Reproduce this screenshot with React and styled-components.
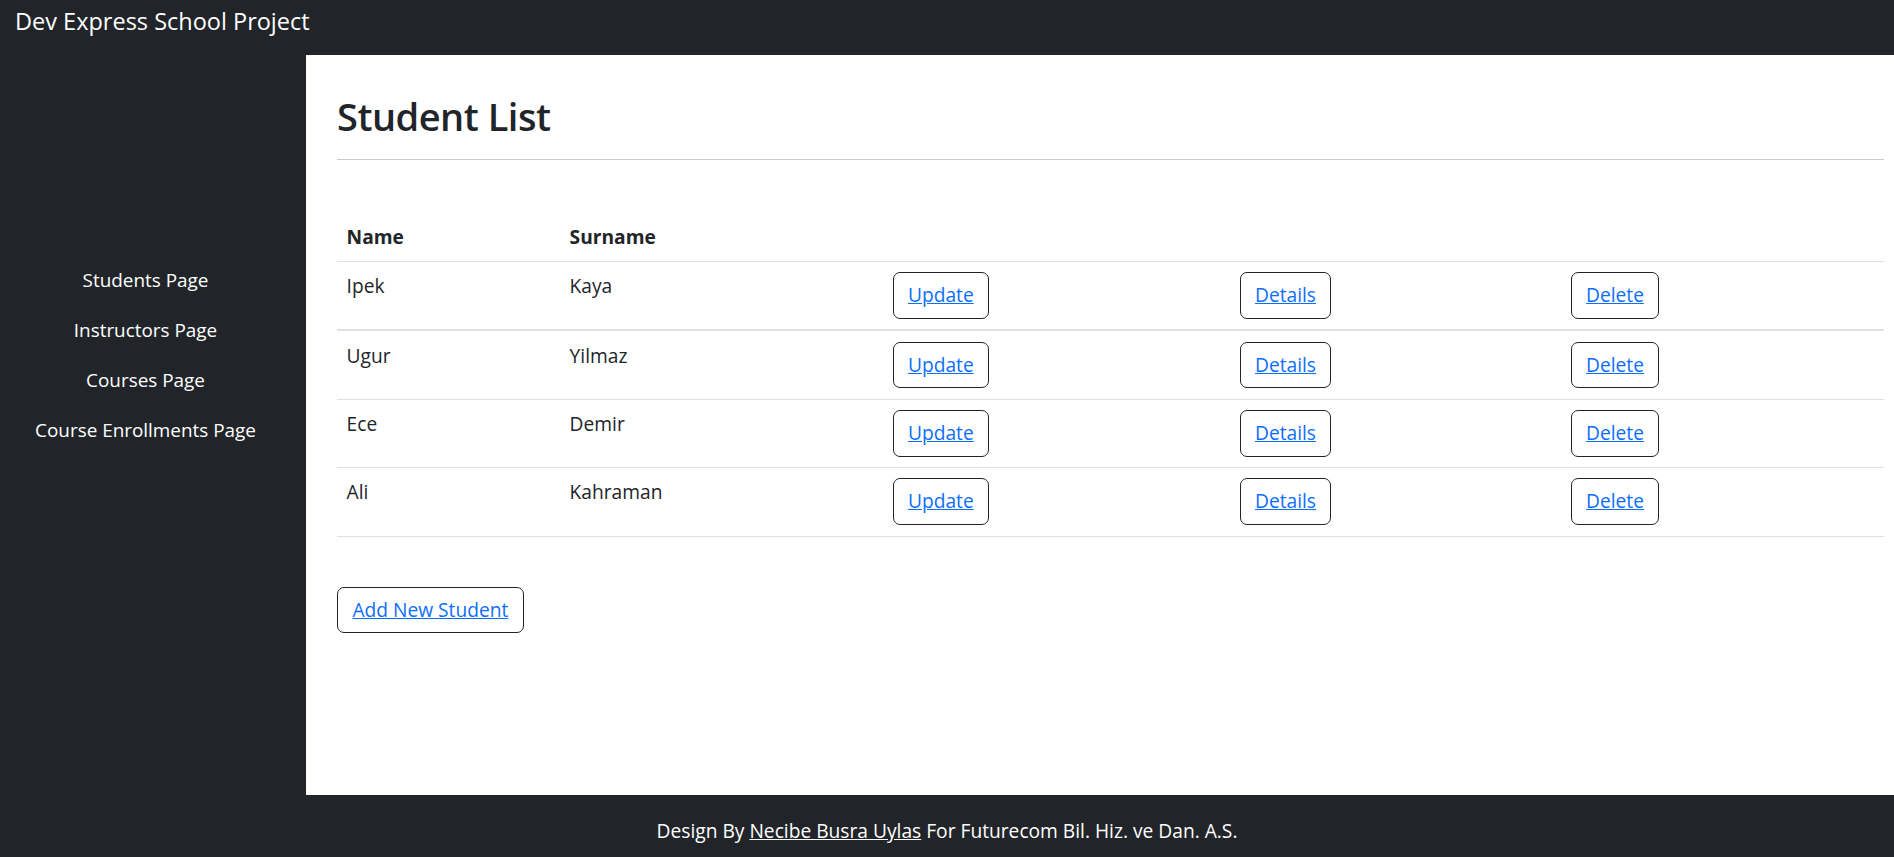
import React from "react";
import styled, { createGlobalStyle } from "styled-components";

const GlobalStyle = createGlobalStyle`
  html, body { margin: 0; padding: 0; }
  body {
    font-family: "Open Sans", "Noto Sans", "Liberation Sans", sans-serif;
    font-size: 19.2px;
    line-height: 1.5;
    color: #212529;
    background: #fff;
    overflow: hidden;
  }
  * { box-sizing: border-box; }
`;

const Page = styled.div`
  display: grid;
  grid-template-rows: 55px 1fr 62px;
  height: 100vh;
`;

const Navbar = styled.header`
  background: #212529;
  display: flex;
  align-items: flex-start;
  padding: 3px 0 0 15px;
`;

const Brand = styled.a`
  color: #fff;
  font-size: 23.5px;
  line-height: 36px;
  text-decoration: none;
`;

const Body = styled.div`
  display: grid;
  grid-template-columns: 306px 1fr;
  min-height: 0;
`;

const Sidebar = styled.nav`
  background: #212529;
  padding: 200px 15px 0 0;
`;

const NavList = styled.ul`
  list-style: none;
  margin: 0;
  padding: 0;
  display: flex;
  flex-direction: column;
  align-items: center;
`;

const NavLink = styled.a`
  display: block;
  color: #fff;
  text-decoration: none;
  padding: 10.6px 16px;
  line-height: 28.8px;
  font-size: 18.9px;
`;

const Main = styled.main`
  background: #fff;
  padding: 37px 10px 0 31px;
`;

const Title = styled.h1`
  margin: 0;
  font-size: 38px;
  font-weight: 600;
  letter-spacing: -0.5px;
  line-height: 48px;
`;

const Rule = styled.hr`
  margin: 19px 0 0;
  border: 0;
  border-top: 1px solid #c8c9ca;
`;

const Table = styled.table`
  width: 100%;
  border-collapse: collapse;
  margin: 53px 0 50px;
`;

const HeadCell = styled.th`
  text-align: left;
  font-weight: 700;
  padding: 9.6px;
  width: ${(p) => p.$width || "auto"};
  border-bottom: 1px solid #dee2e6;
  vertical-align: bottom;
`;

const Row = styled.tr`
  border-bottom: ${(p) => (p.$thick ? "2px" : "1px")} solid #dee2e6;
`;

const Cell = styled.td`
  padding: 10.3px 9.6px;
  vertical-align: top;
`;

const ActionButton = styled.a`
  display: inline-block;
  padding: 8px 14.4px;
  border: 1px solid #212529;
  border-radius: 7px;
  background: #fff;
  color: #0d6efd;
  text-decoration: underline;
  line-height: 28.8px;
  cursor: pointer;
`;

const Footer = styled.footer`
  background: #212529;
  color: #fff;
  text-align: center;
  padding-top: 21.6px;
  line-height: 28.8px;
`;

const FooterLink = styled.a`
  color: #fff;
  text-decoration: underline;
`;

const students = [
  { name: "Ipek", surname: "Kaya" },
  { name: "Ugur", surname: "Yilmaz" },
  { name: "Ece", surname: "Demir" },
  { name: "Ali", surname: "Kahraman" },
];

export default function App() {
  return (
    <>
      <GlobalStyle />
      <Page>
        <Navbar>
          <Brand href="#">Dev Express School Project</Brand>
        </Navbar>
        <Body>
          <Sidebar>
            <NavList>
              <li><NavLink href="#">Students Page</NavLink></li>
              <li><NavLink href="#">Instructors Page</NavLink></li>
              <li><NavLink href="#">Courses Page</NavLink></li>
              <li><NavLink href="#">Course Enrollments Page</NavLink></li>
            </NavList>
          </Sidebar>
          <Main>
            <Title>Student List</Title>
            <Rule />
            <Table>
              <thead>
                <tr>
                  <HeadCell $width="223px">Name</HeadCell>
                  <HeadCell $width="323px">Surname</HeadCell>
                  <HeadCell $width="347px"></HeadCell>
                  <HeadCell $width="331px"></HeadCell>
                  <HeadCell></HeadCell>
                </tr>
              </thead>
              <tbody>
                {students.map((s, i) => (
                  <Row key={s.name} $thick={i === 0}>
                    <Cell>{s.name}</Cell>
                    <Cell>{s.surname}</Cell>
                    <Cell><ActionButton>Update</ActionButton></Cell>
                    <Cell><ActionButton>Details</ActionButton></Cell>
                    <Cell><ActionButton>Delete</ActionButton></Cell>
                  </Row>
                ))}
              </tbody>
            </Table>
            <ActionButton>Add New Student</ActionButton>
          </Main>
        </Body>
        <Footer>
          Design By <FooterLink href="#">Necibe Busra Uylas</FooterLink> For Futurecom Bil. Hiz. ve Dan. A.S.
        </Footer>
      </Page>
    </>
  );
}
